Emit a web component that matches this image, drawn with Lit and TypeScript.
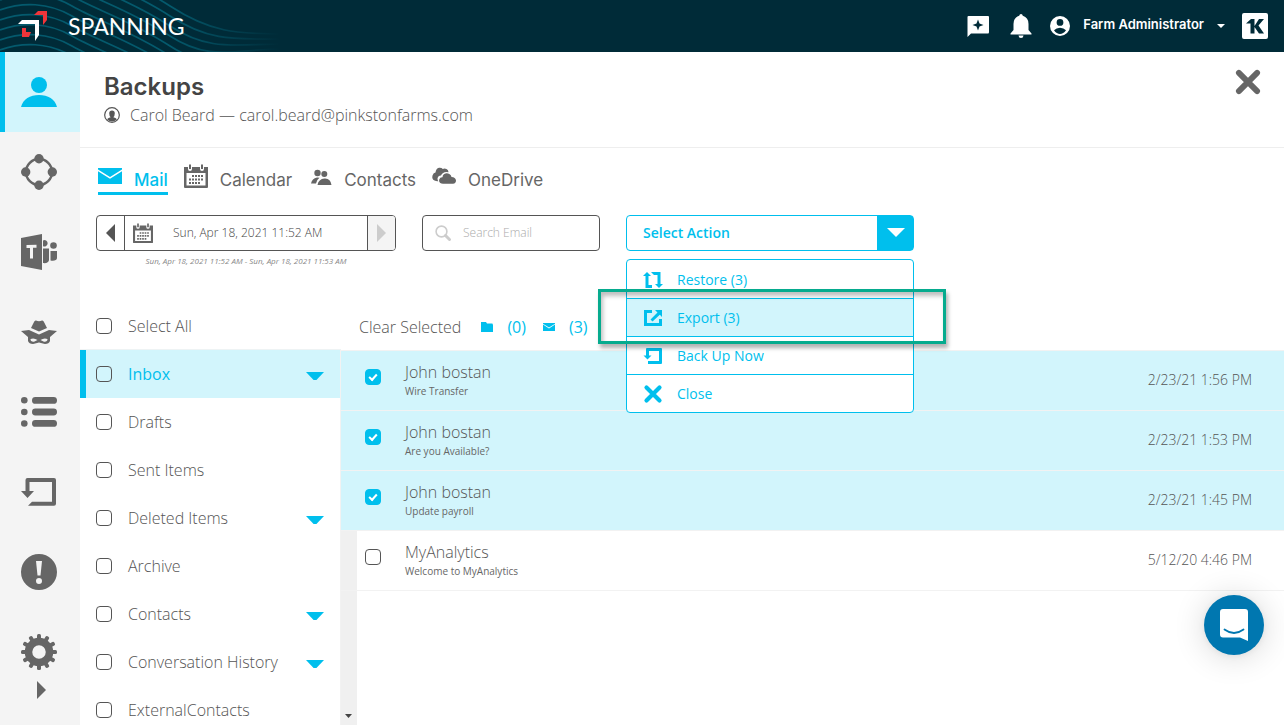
import { LitElement, html, css, svg, nothing } from "lit";
import { customElement, property } from "lit/decorators.js";
import { classMap } from "lit/directives/class-map.js";

const calendar = svg`<path fill-rule="evenodd" d="M0 3H4V5a2 2 0 0 0 4 0V3H16V5a2 2 0 0 0 4 0V3H24V23a1 1 0 0 1-1 1H1a1 1 0 0 1-1-1ZM2.500 9V21.500H21.500V9Z"/><path d="M5 0.500H7V5H5ZM17 0.500H19V5H17Z"/><path d="M8 11h2v2H8zM11 11h2v2h-2zM14 11h2v2h-2zM17 11h2v2h-2zM5 14.500h2v2H5zM8 14.500h2v2H8zM11 14.500h2v2h-2zM14 14.500h2v2h-2zM17 14.500h2v2h-2zM5 18h2v2H5zM8 18h2v2H8zM11 18h2v2h-2zM14 18h2v2h-2z"/>`;
const mail = svg`<path d="M0 4H24V5.500L12 13 0 5.500ZM0 7.200L12 14.800 24 7.200V20H0Z"/>`;
const gearTeeth = Array.from({ length: 12 }, (_, i) => svg`<rect x="16" y="0" width="4" height="8" rx="1.500" transform=${`rotate(${i * 30} 18 18)`}/>`);

const icons: Record<string, { box: string; art: unknown }> = {
  person: { box: "0 0 36 36", art: svg`<circle cx="18" cy="11" r="8"/><path d="M0 33C2 25 9 21 18 21S34 25 36 33Z"/>` },
  ring: { box: "0 0 36 36", art: svg`<circle cx="18" cy="18" r="13" fill="none" stroke="currentColor" stroke-width="2.500"/><circle cx="18" cy="4.700" r="4.700"/><circle cx="31.300" cy="18" r="4.700"/><circle cx="18" cy="31.300" r="4.700"/><circle cx="4.700" cy="18" r="4.700"/>` },
  teams: { box: "0 0 36 36", art: svg`<path fill-rule="evenodd" d="M0 4L21 0V36L0 32ZM5.500 11V14H9V24.500H12V13.700H15.500V10.800Z"/><path d="M22 6.500A3.200 3.200 0 1 1 22 12.200ZM22 14.500H28V26C28 28.500 25 29.500 22 29ZM29.500 17H36V24C36 26.500 33 27 29.500 26.500Z"/><circle cx="32.500" cy="11.500" r="3.300"/>` },
  spy: { box: "0 0 36 36", art: svg`<path d="M15 6.500Q18 8 21 6.500 22.500 6 23.500 9L26 14 18 17.500 10 14 12.500 9Q13.500 6 15 6.500Z"/><path fill-rule="evenodd" d="M0 17L8 16 18 20.500 28 16 36 17 29 23V27Q28 30 24 30L18 28.500 12 30Q8 30 7 27V23ZM9.500 25Q9.500 28 13 27.700L16.500 26Q13 23.500 9.500 25ZM26.500 25Q26.500 28 23 27.700L19.500 26Q23 23.500 26.500 25Z"/>` },
  list: { box: "0 0 36 36", art: svg`<circle cx="3.300" cy="6.300" r="3.300"/><circle cx="3.300" cy="18" r="3.300"/><circle cx="3.300" cy="29.500" r="3.300"/><rect x="11" y="3" width="25" height="6.800" rx="3.400"/><rect x="11" y="14.600" width="25" height="6.800" rx="3.400"/><rect x="11" y="26" width="25" height="6.800" rx="3.400"/>` },
  backup: { box: "0 0 36 36", art: svg`<path d="M4.500 6Q4.500 4 6.500 4H33Q35 4 35 6V29.700Q35 31.700 33 31.700H7L11 27.700H31V8H8.500V17H13L6.500 24 0 17H4.500Z"/>` },
  backupBold: { box: "0 0 20 20", art: svg`<path d="M3 3Q3 2 4 2H18Q19 2 19 3V17Q19 18 18 18H5V15H16V5H6V9.500H8.500L4.500 13.500 .5 9.500H3Z"/>` },
  alert: { box: "0 0 36 36", art: svg`<path fill-rule="evenodd" d="M18 0A18 18 0 1 1 18 36A18 18 0 1 1 18 0ZM15 7L16.500 21.500H19.500L21 7ZM18 24A3 3 0 1 0 18 30A3 3 0 1 0 18 24Z"/>` },
  gear: { box: "0 0 36 36", art: svg`<circle cx="18" cy="18" r="10.500" fill="none" stroke="currentColor" stroke-width="7.500"/>${gearTeeth}` },
  mail: { box: "0 0 24 24", art: mail },
  calendar: { box: "0 0 24 24", art: calendar },
  contacts: { box: "0 0 24 24", art: svg`<circle cx="9.500" cy="9" r="3.200"/><circle cx="16.300" cy="10" r="3"/><path d="M3 19.500Q4 14.500 9 13.500L11.500 13.800Q8.500 16 8 19.500ZM9.500 21Q10.500 15 16.500 14.500T23.500 21Z"/>` },
  cloud: { box: "0 0 24 24", art: svg`<path d="M2.500 16.500Q-.500 15 .5 11.500 1.500 8.500 3.500 8.500 4 4.500 7 3.800 9.500 3.500 10.800 5 12.500 3.800 14.500 5 16.500 6 16.500 8.200 11 7 9 11.500 6 11.700 5.500 14.500Q5.500 16 6.300 17.200 4.500 17.500 2.500 16.500Z"/><path d="M9.500 19.500Q6.500 18.500 7.200 15.500 8 13 10.500 13.200 10.800 9.700 14.300 9.300 18.500 9.300 19.500 13 23.500 13.200 24 16.500 24 19.500 21 19.800H11Z"/>` },
  account: { box: "0 0 24 24", art: svg`<circle cx="12" cy="12" r="11" fill="none" stroke="currentColor" stroke-width="1.800"/><path d="M4.500 18.500Q6.500 15.800 10 15.300 7.800 13.500 7.800 9.500 8 5.300 12 5.300T16.200 9.500Q16.200 13.500 14 15.300 17.500 15.800 19.500 18.500 12 25 4.500 18.500Z"/>` },
  accountSolid: { box: "0 0 24 24", art: svg`<path fill-rule="evenodd" d="M12 0A12 12 0 1 1 12 24A12 12 0 1 1 12 0ZM12 3.600A4 4 0 1 0 12 11.700A4 4 0 1 0 12 3.600ZM4.800 17Q8 21.500 12 21.500T19.200 17Q16.500 14 12 14T4.800 17Z"/>` },
  search: { box: "0 0 16 16", art: svg`<circle cx="6.500" cy="6.500" r="5.400" fill="none" stroke="currentColor" stroke-width="1.600"/><path d="M10.500 10.500L14.500 14.500" stroke="currentColor" stroke-width="3" stroke-linecap="round"/>` },
  restore: { box: "0 0 20 20", art: svg`<path d="M0 6L4 2 8 6H5.500V15H9V18H2.500V6ZM8 2H17.500V14H20L16 18 12 14H14.500V5H11Z"/>` },
  export: { box: "0 0 20 20", art: svg`<path d="M1 2H9V5H4V15H16V11H19V18H1ZM12 2H19V9L16.800 6.800 9.500 13.500 7.500 11.500 14.500 4.500Z"/>` },
  close: { box: "0 0 20 20", art: svg`<path d="M3.500 3.500L16.500 16.500M16.500 3.500L3.500 16.500" stroke="currentColor" stroke-width="4.200" stroke-linecap="round"/>` },
  folder: { box: "0 0 12 12", art: svg`<path d="M0 1H5L6 2.500H11.500V3.200L12 3.500V11H0Z"/>` },
  feedback: { box: "0 0 24 24", art: svg`<path fill-rule="evenodd" d="M2.500 2H22Q23 2 23 3V18Q23 19.500 22 19.500H5L1.500 23V3Q1.500 2 2.500 2ZM12 5.500L10.500 9.500 6.500 11 10.500 12.500 12 16.500 13.500 12.500 17.500 11 13.500 9.500Z"/>` },
  bell: { box: "0 0 24 24", art: svg`<path d="M12 0Q13.500 0 13.800 1.800 19.500 3.500 19.500 10V16L22.500 19.500V20.500H1.500V19.500L4.500 16V10Q4.500 3.500 10.200 1.800 10.500 0 12 0ZM9.500 21.500H14.500Q14.300 24 12 24T9.500 21.500Z"/>` },
  kaseya: { box: "0 0 26 26", art: svg`<path fill-rule="evenodd" d="M2 0H24Q26 0 26 2V24Q26 26 24 26H2Q0 26 0 24V2Q0 0 2 0ZM4 10.500L9 6H12.500V13L17 6H22L16.500 12.500 22 20.500H17L12.500 14V20.500H8.500V10.500Z"/>` },
  chat: { box: "0 0 28 32", art: svg`<path d="M3 0H25Q28 0 28 3V32L20 28.500H3Q0 28.500 0 25.500V3Q0 0 3 0Z"/><path d="M4.500 20.500Q14 27.500 23.500 20.500" fill="none" stroke="#0077b0" stroke-width="1.800" stroke-linecap="round"/>` },
};

@customElement("ui-icon")
export class UiIcon extends LitElement {
  @property() name = "";
  static styles = css`
    :host { display: block; flex: none; width: 24px; height: 24px; }
    .art { display: block; width: 100%; height: 100%; fill: currentColor; overflow: visible; }
  `;
  render() {
    const icon = icons[this.name];
    return icon ? html`<svg class="art" viewBox=${icon.box} aria-hidden="true">${icon.art}</svg>` : nothing;
  }
}

@customElement("top-bar")
export class TopBar extends LitElement {
  static styles = css`
    :host { display: block; flex: none; }
    .bar { height: 52px; display: flex; align-items: center; justify-content: space-between; background: #002b38; color: #fff; position: relative; padding: 0 16px 0 18px; }
    .waves { position: absolute; left: 0; top: 0; width: 290px; height: 52px; }
    .brand { display: flex; align-items: center; gap: 20px; position: relative; color: #fff; text-decoration: none; font: 400 23px/32px Lato, sans-serif; }
    .logo { width: 30px; height: 30px; display: block; }
    .tools { display: flex; align-items: center; }
    .tool { border: 0; padding: 0; background: none; color: #fff; display: flex; align-items: center; font: 600 13px/20px Inter, sans-serif; }
    .feedback { margin-right: 19px; }
    .bell { margin-right: 17px; }
    .account { margin-right: 17px; gap: 13px; }
    .face { width: 20px; height: 20px; }
    .user { padding-bottom: 4px; }
    .caret { width: 8px; height: 4px; background: #fff; clip-path: polygon(0 0, 100% 0, 50% 100%); }
    .kaseya { width: 26px; height: 26px; }
  `;
  render() {
    const waves = Array.from({ length: 12 }, (_, i) => {
      const y = i * 10 - 50;
      return svg`<path d=${`M0 ${y}C22 ${y - 8} 48 ${y - 8} 72 ${y + 6}S130 ${y + 30} 170 ${y + 56}S235 ${34 + i * 5} 285 ${34 + i * 5}`}/>`;
    });
    return html`
      <header class="bar">
        <svg class="waves" viewBox="0 0 290 52" aria-hidden="true">
          <defs><linearGradient id="fade" gradientUnits="userSpaceOnUse" x1="0" y1="0" x2="280" y2="0">
            <stop offset="0" stop-color="#045a6d"/><stop offset="0.600" stop-color="#045a6d"/><stop offset="1" stop-color="#002b38"/>
          </linearGradient></defs>
          <g fill="none" stroke="url(#fade)" stroke-width="1.700">${waves}</g>
        </svg>
        <a class="brand" href="#">
          <svg class="logo" viewBox="0 0 30 30" aria-hidden="true">
            <path fill="#fff" d="M4 9H21V24L17 30V13H0Z"/>
            <path fill="#f0353a" d="M20 0H29V9L25 14V4H16Z"/>
            <path fill="#f0353a" d="M4 17H8V21H13L11 26H4Z"/>
          </svg>
          <span>SPANNING</span>
        </a>
        <div class="tools">
          <button class="tool feedback" aria-label="Feedback"><ui-icon name="feedback"></ui-icon></button>
          <button class="tool bell" aria-label="Notifications"><ui-icon name="bell"></ui-icon></button>
          <button class="tool account"><ui-icon class="face" name="accountSolid"></ui-icon><span class="user">Farm Administrator</span><span class="caret"></span></button>
          <button class="tool" aria-label="Kaseya One"><ui-icon class="kaseya" name="kaseya"></ui-icon></button>
        </div>
      </header>`;
  }
}

@customElement("side-rail")
export class SideRail extends LitElement {
  static styles = css`
    :host { display: block; flex: none; width: 80px; background: #f4f4f4; color: #666; }
    .rail { display: flex; flex-direction: column; }
    .item { display: block; padding: 22px 23px 22px 21px; color: inherit; }
    .item.on { background: #d2f5fc; color: #00bfed; box-shadow: inset 5px 0 #00bfed; }
    .glyph { width: 36px; height: 36px; }
    .more { align-self: center; border: 0; padding: 0; width: 9px; height: 18px; background: #666; clip-path: polygon(0 0, 100% 50%, 0 100%); margin: -11px 0 0 3px; }
  `;
  render() {
    const items = [["person", "Users"], ["ring", "Sites"], ["teams", "Teams"], ["spy", "Dark web"], ["list", "Activity"], ["backup", "Backups"], ["alert", "Alerts"], ["gear", "Settings"]];
    return html`<nav class="rail">
      ${items.map(([icon, label], i) => html`<a href="#" aria-label=${label} class=${classMap({ item: true, on: i === 0 })}><ui-icon class="glyph" name=${icon}></ui-icon></a>`)}
      <button class="more" aria-label="Expand"></button>
    </nav>`;
  }
}

const box = css`
  .box { appearance: none; flex: none; margin: 0; width: 16px; height: 16px; border: 1px solid #555; border-radius: 4px; background: #fff; display: grid; place-items: center; }
  .box:checked { background: #00bfed; border-color: #00bfed; }
  .box:checked::before { content: ""; width: 6px; height: 3px; border: solid #fff; border-width: 0 0 2px 2px; transform: translateY(-1px) rotate(-48deg); }
`;

@customElement("folder-list")
export class FolderList extends LitElement {
  static styles = [box, css`
    :host { display: flex; flex-direction: column; flex: none; width: 261px; overflow: hidden; }
    .row { flex: none; height: 48px; display: flex; align-items: center; gap: 16px; padding: 0 16px; }
    .row.all { border-bottom: 1px solid #eef3f4; height: 47px; }
    .row.on { background: #d2f5fc; box-shadow: inset 6px 0 #00bfed; color: #00bfed; font-weight: 400; }
    .row.on .box { background: transparent; }
    .folders { flex: 1; min-height: 0; border-right: 1px solid #f2f2f2; }
    .name { flex: 1; white-space: nowrap; }
    .toggle { border: 0; padding: 0; width: 18px; height: 8px; margin-top: 4px; background: #00bfed; clip-path: polygon(0 0, 100% 0, 58% 100%, 42% 100%); }
  `];
  render() {
    const folders: [string, boolean][] = [["Inbox", true], ["Drafts", false], ["Sent Items", false], ["Deleted Items", true], ["Archive", false], ["Contacts", true], ["Conversation History", true], ["ExternalContacts", false]];
    return html`
      <div class="row all"><input class="box" type="checkbox" id="all"><label class="name" for="all">Select All</label></div>
      <div class="folders">
        ${folders.map(([name, open], i) => html`
          <div class=${classMap({ row: true, on: i === 0 })}>
            <input class="box" type="checkbox" id=${`f${i}`}><label class="name" for=${`f${i}`}>${name}</label>
            ${open ? html`<button class="toggle" aria-label=${`Expand ${name}`}></button>` : nothing}
          </div>`)}
      </div>`;
  }
}

@customElement("message-list")
export class MessageList extends LitElement {
  static styles = [box, css`
    :host { flex: 1; min-width: 0; display: flex; flex-direction: column; }
    .summary { height: 48px; display: flex; align-items: center; padding: 2px 18px 0; box-sizing: border-box; }
    .clear { border: 0; padding: 0; background: none; font: inherit; color: inherit; margin-right: 20px; }
    .mini { width: 12px; height: 12px; color: #00bfed; margin-right: 14px; }
    .count { color: #00bfed; font-weight: 400; margin-right: 17px; }
    .body { flex: 1; min-height: 0; display: flex; flex-direction: column; justify-content: space-between; background: linear-gradient(#f0f0f0, #f0f0f0) left / 16px 100% no-repeat; }
    .rows { margin: 0; padding: 0; list-style: none; border-top: 1px solid #f2f2f2; }
    .row { display: flex; align-items: flex-start; gap: 24px; height: 59px; padding: 0 32px 0 24px; border-bottom: 1px solid #f2f2f2; }
    .row.on { background: #d2f5fc; }
    .row .box { margin-top: 18px; }
    .text { flex: 1; padding-top: 10px; display: flex; flex-direction: column; }
    .from { line-height: 22px; }
    .subject { font-size: 10px; line-height: 16px; font-weight: 400; color: #666; }
    .date { font-size: 14px; line-height: 58px; }
    .down { border: 0; padding: 0; width: 7px; height: 4px; margin: 0 0 7px 4px; background: #444; clip-path: polygon(0 0, 100% 0, 50% 100%); }
  `];
  render() {
    const rows: [string, string, string, boolean][] = [
      ["John bostan", "Wire Transfer", "2/23/21 1:56 PM", true],
      ["John bostan", "Are you Available?", "2/23/21 1:53 PM", true],
      ["John bostan", "Update payroll", "2/23/21 1:45 PM", true],
      ["MyAnalytics", "Welcome to MyAnalytics", "5/12/20 4:46 PM", false],
    ];
    return html`
      <div class="summary">
        <button class="clear">Clear Selected</button>
        <ui-icon class="mini" name="folder"></ui-icon><span class="count">(0)</span>
        <ui-icon class="mini" name="mail"></ui-icon><span class="count">(3)</span>
      </div>
      <div class="body">
        <ul class="rows">
          ${rows.map(([from, subject, date, on], i) => html`
            <li class=${classMap({ row: true, on })}>
              <input class="box" type="checkbox" id=${`m${i}`} .checked=${on}>
              <label class="text" for=${`m${i}`}><span class="from">${from}</span><span class="subject">${subject}</span></label>
              <time class="date">${date}</time>
            </li>`)}
        </ul>
        <button class="down" aria-label="Scroll down"></button>
      </div>`;
  }
}

@customElement("action-menu")
export class ActionMenu extends LitElement {
  static styles = css`
    :host { display: block; width: 288px; position: relative; color: #00bfed; }
    .field { position: relative; display: flex; }
    .select { appearance: none; box-sizing: border-box; width: 100%; height: 36px; border: 1px solid #00bfed; border-radius: 4px; padding: 0 52px 0 16px; color: inherit; font: 600 14px/20px "Open Sans", sans-serif; background: linear-gradient(#00bfed, #00bfed) right / 36px 100% no-repeat #fff; }
    .caret { position: absolute; right: 9px; top: 13px; width: 18px; height: 9px; background: #fff; clip-path: polygon(0 0, 100% 0, 50% 100%); pointer-events: none; }
    .menu { position: absolute; z-index: 2; top: 44px; left: 0; right: 0; padding-top: 1px; border: 1px solid #00bfed; border-radius: 4px; background: #fff; overflow: hidden; }
    .entry { display: flex; align-items: center; gap: 14px; width: 100%; height: 38px; border: 0; border-bottom: 1px solid #00bfed; padding: 0 16px; background: none; color: inherit; font: 400 14px/20px "Open Sans", sans-serif; }
    .entry:last-child { border-bottom: 0; height: 37px; }
    .entry.on { background: #d2f5fc; }
    .glyph { width: 20px; height: 20px; }
    .marker { position: absolute; z-index: 3; top: 74px; left: -28px; right: -32px; height: 49px; border: 3px solid #06ab8e; box-shadow: 2px 4px 4px rgba(0, 0, 0, 0.3), inset 2px 4px 4px rgba(0, 0, 0, 0.25); pointer-events: none; }
  `;
  render() {
    const entries = [["restore", "Restore (3)"], ["export", "Export (3)"], ["backupBold", "Back Up Now"], ["close", "Close"]];
    return html`
      <div class="field">
        <select class="select" aria-label="Action"><option>Select Action</option></select>
        <span class="caret"></span>
      </div>
      <div class="menu">
        ${entries.map(([icon, label], i) => html`<button class=${classMap({ entry: true, on: i === 1 })}><ui-icon class="glyph" name=${icon}></ui-icon>${label}</button>`)}
      </div>
      <div class="marker"></div>`;
  }
}

@customElement("app-root")
export class AppRoot extends LitElement {
  static styles = css`
    :host { display: flex; flex-direction: column; height: 100vh; overflow: hidden; background: #fff; color: #555; font: 300 16px/24px "Open Sans", sans-serif; }
    .main { flex: 1; min-height: 0; display: flex; }
    .page { flex: 1; min-width: 0; display: flex; flex-direction: column; }
    .head { display: flex; justify-content: space-between; align-items: flex-start; padding: 19px 24px 20px; border-bottom: 1px solid #eee; }
    .title { margin: 0; font: 600 24px/32px Inter, sans-serif; color: #444; }
    .who { display: flex; align-items: center; gap: 10px; }
    .avatar { width: 16px; height: 16px; }
    .shut { border: 0; padding: 0; margin: -3px -2px 0; background: none; color: #666; }
    .shut-x { width: 28px; height: 28px; }
    .tabs { display: flex; gap: 16px; padding: 16px 18px 0; font: 400 17px/28px Inter, sans-serif; }
    .tab { display: flex; gap: 12px; height: 28px; color: #666; text-decoration: none; border-bottom: 3px solid transparent; }
    .tab.on { color: #00bfed; border-color: #00bfed; font-weight: 500; }
    .label { padding-top: 2px; }
    .tools { display: flex; align-items: flex-start; gap: 26px; padding: 20px 16px 0; height: 107px; box-sizing: border-box; }
    .when { width: 300px; text-align: center; }
    .picker { display: flex; height: 34px; border: 1px solid #555; border-radius: 4px; overflow: hidden; }
    .step { flex: none; width: 28px; border: 0; padding: 0; background: none; display: grid; place-items: center; color: #555; }
    .prev { border-right: 1px solid #555; }
    .next { border-left: 1px solid #555; background: #f4f4f4; color: #ccc; }
    .arrow { width: 9px; height: 18px; background: currentColor; clip-path: polygon(0 0, 100% 50%, 0 100%); }
    .prev .arrow { clip-path: polygon(100% 0, 0 50%, 100% 100%); }
    .date { flex: 1; display: flex; align-items: center; padding-left: 8px; min-width: 0; }
    .cal { width: 20px; height: 20px; color: #666; }
    .input { flex: 1; min-width: 0; border: 0; padding: 0; outline: 0; background: none; font: 300 12px/20px "Open Sans", sans-serif; color: #444; }
    .date .input { padding-left: 20px; }
    .range { font-size: 8px; font-weight: 400; line-height: 20px; font-style: italic; color: #888; }
    .search { display: flex; align-items: center; gap: 12px; box-sizing: border-box; width: 178px; height: 36px; padding: 0 12px; border: 1px solid #555; border-radius: 4px; color: #ccc; }
    .lens { width: 16px; height: 16px; }
    .input::placeholder { color: #aaa; opacity: 1; }
    .panes { flex: 1; min-height: 0; display: flex; }
    .chat { position: absolute; right: 20px; bottom: 70px; width: 60px; height: 60px; border: 0; border-radius: 50%; background: #0077b0; color: #fff; display: grid; place-items: center; box-shadow: 0 1px 6px rgba(0, 0, 0, 0.06), 0 2px 32px rgba(0, 0, 0, 0.16); }
    .bubble { width: 28px; height: 32px; }
  `;
  render() {
    const tabs = [["mail", "Mail"], ["calendar", "Calendar"], ["contacts", "Contacts"], ["cloud", "OneDrive"]];
    return html`
      <top-bar></top-bar>
      <div class="main">
        <side-rail></side-rail>
        <main class="page">
          <header class="head">
            <div>
              <h1 class="title">Backups</h1>
              <div class="who"><ui-icon class="avatar" name="account"></ui-icon><span>Carol Beard — carol.beard@pinkstonfarms.com</span></div>
            </div>
            <button class="shut" aria-label="Close page"><ui-icon class="shut-x" name="close"></ui-icon></button>
          </header>
          <nav class="tabs">
            ${tabs.map(([icon, label], i) => html`<a href="#" class=${classMap({ tab: true, on: i === 0 })}><ui-icon name=${icon}></ui-icon><span class="label">${label}</span></a>`)}
          </nav>
          <div class="tools">
            <div class="when">
              <div class="picker">
                <button class="step prev" aria-label="Previous backup"><span class="arrow"></span></button>
                <label class="date"><ui-icon class="cal" name="calendar"></ui-icon><input class="input" aria-label="Backup date" readonly value="Sun, Apr 18, 2021 11:52 AM"></label>
                <button class="step next" aria-label="Next backup"><span class="arrow"></span></button>
              </div>
              <div class="range">Sun, Apr 18, 2021 11:52 AM - Sun, Apr 18, 2021 11:53 AM</div>
            </div>
            <label class="search"><ui-icon class="lens" name="search"></ui-icon><input class="input" aria-label="Search Email" placeholder="Search Email"></label>
            <action-menu></action-menu>
          </div>
          <div class="panes"><folder-list></folder-list><message-list></message-list></div>
        </main>
      </div>
      <button class="chat" aria-label="Open chat"><ui-icon class="bubble" name="chat"></ui-icon></button>`;
  }
}
